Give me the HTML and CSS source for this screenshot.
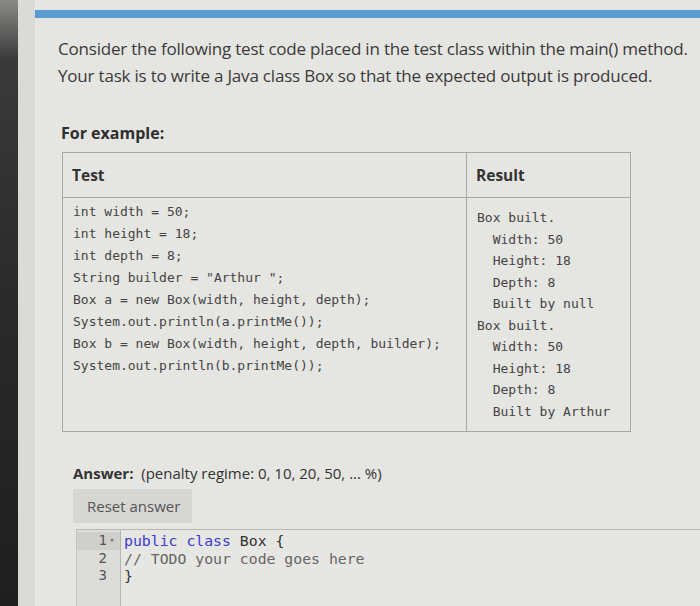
FILE: index.html
```html
<!DOCTYPE html>
<html>
<head>
<meta charset="utf-8">
<link rel="stylesheet" href="styles.css">
</head>
<body>
<div class="screen">
  <div class="bezel"></div>
  <div class="strip"></div>
  <div class="main">
    <div class="topbar"></div>
    <div class="content">
      <p class="intro">Consider the following test code placed in the test class within the main() method.<br>Your task is to write a Java class Box so that the expected output is produced.</p>
      <h4 class="for-example">For example:</h4>
      <table class="examples">
        <thead>
          <tr><th class="col-test">Test</th><th class="col-result">Result</th></tr>
        </thead>
        <tbody>
          <tr>
            <td class="cell-test"><pre>int width = 50;
int height = 18;
int depth = 8;
String builder = "Arthur ";
Box a = new Box(width, height, depth);
System.out.println(a.printMe());
Box b = new Box(width, height, depth, builder);
System.out.println(b.printMe());</pre></td>
            <td class="cell-result"><pre>Box built.
  Width: 50
  Height: 18
  Depth: 8
  Built by null
Box built.
  Width: 50
  Height: 18
  Depth: 8
  Built by Arthur</pre></td>
          </tr>
        </tbody>
      </table>
      <div class="answer-label"><b>Answer:</b>&nbsp; (penalty regime: 0, 10, 20, 50, ... %)</div>
      <div class="reset-btn">Reset answer</div>
      <div class="editor">
        <div class="gutter">
          <div class="gl active"><span>1</span><span class="fold">▾</span></div>
          <div class="gl"><span>2</span><span class="fold"></span></div>
          <div class="gl"><span>3</span><span class="fold"></span></div>
        </div>
        <div class="code">
          <div class="cl"><span class="kw">public</span> <span class="kw">class</span> Box {</div>
          <div class="cl"><span class="cm">// TODO your code goes here</span></div>
          <div class="cl">}</div>
        </div>
      </div>
    </div>
  </div>
</div>
</body>
</html>
```
FILE: styles.css
```css
html, body {
  margin: 0;
  padding: 0;
  width: 700px;
  height: 606px;
  overflow: hidden;
  background: #e5e5e1;
}
.screen {
  display: flex;
  height: 606px;
}
.bezel {
  width: 18px;
  flex: none;
  background: linear-gradient(#8a8a88 0, #3a3a3a 60px, #2a2a2a 300px, #1f1f1f 606px);
}
.strip {
  width: 17px;
  flex: none;
  background: #dadad6;
}
.main {
  flex: 1;
  padding-top: 10px;
  font-family: "Open Sans", "Noto Sans", sans-serif;
  color: #333;
}
.topbar {
  height: 8px;
  background: #5b9bd3;
}
.content {
  padding-left: 23px;
}
.intro {
  margin: 17px 0 0;
  font-size: 17px;
  line-height: 27px;
  letter-spacing: -0.2px;
  color: #3a3a3a;
}
.for-example {
  margin: 32px 0 0 3px;
  font-size: 16px;
  font-weight: 700;
  line-height: 24px;
  color: #2e2e2e;
}
.examples {
  margin: 7px 0 0 4px;
  border-collapse: collapse;
  border: 1px solid #a8a8a4;
}
.examples th {
  text-align: left;
  font-size: 15.5px;
  font-weight: 700;
  height: 44px;
  padding: 0 9px;
  border-bottom: 1px solid #a8a8a4;
  vertical-align: middle;
  color: #333;
}
.col-test {
  width: 385px;
}
.col-result {
  width: 145px;
  border-left: 1px solid #a8a8a4;
}
.examples td {
  vertical-align: top;
  padding: 3px 10px 9px;
}
.cell-result {
  border-left: 1px solid #a8a8a4;
}
.examples pre {
  margin: 0;
  font-family: "DejaVu Sans Mono", "Liberation Mono", monospace;
  font-size: 13px;
  line-height: 22px;
  color: #444;
}
.cell-result pre {
  line-height: 21.5px;
  margin-top: 6px;
}
.answer-label {
  margin: 30px 0 0 15px;
  font-size: 15px;
  line-height: 22px;
  color: #333;
}
.answer-label b {
  font-weight: 700;
}
.reset-btn {
  margin: 5px 0 0 15px;
  width: 119px;
  height: 34px;
  box-sizing: border-box;
  background: #d6d6d2;
  font-size: 15px;
  line-height: 34px;
  padding-left: 14px;
  color: #555;
}
.editor {
  margin: 6px 0 0 18px;
  display: flex;
  border-top: 1px solid #b8b8b4;
  border-left: 1px solid #c4c4c0;
  height: 90px;
  background: #e6e6e2;
}
.gutter {
  width: 43px;
  flex: none;
  background: #dcdcd8;
  border-right: 1px solid #b4b4b0;
  padding-top: 2px;
  font-family: "DejaVu Sans Mono", "Liberation Mono", monospace;
  font-size: 14px;
  color: #555;
}
.gl {
  height: 17.5px;
  line-height: 17.5px;
  display: flex;
  justify-content: flex-end;
  padding-right: 3px;
}
.gl.active {
  background: #cfcfcb;
}
.fold {
  width: 10px;
  font-size: 9px;
  text-align: center;
  color: #777;
}
.code {
  padding-top: 2px;
  padding-left: 3px;
  font-family: "DejaVu Sans Mono", "Liberation Mono", monospace;
  font-size: 14.8px;
  color: #333;
}
.cl {
  height: 17.5px;
  line-height: 17.5px;
  white-space: pre;
}
.kw {
  color: #3b3bd0;
}
.cm {
  color: #666;
}
```
